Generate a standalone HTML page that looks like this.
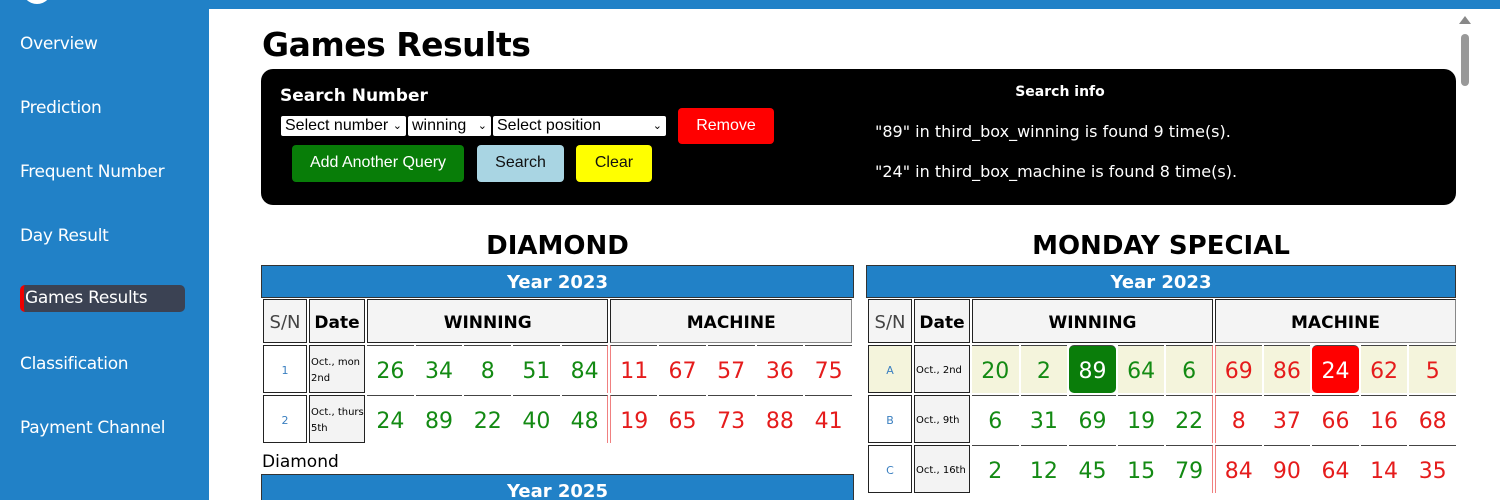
<!DOCTYPE html>
<html style="width:1500px;height:500px;overflow:hidden"><head><meta charset="utf-8"><style>
*{box-sizing:border-box;margin:0;padding:0}
body{width:1500px;height:500px;overflow:hidden;background:#fff;font-family:"DejaVu Sans","Liberation Sans",sans-serif;position:relative}
.side{position:absolute;left:0;top:0;width:209px;height:500px;background:#2181c7}
.side div{position:absolute;left:20px;color:#fff;font-size:17px;letter-spacing:-0.3px}
.topbar{position:absolute;left:209px;top:0;width:1291px;height:9px;background:#2181c7}
.act{background:#3b4253;border-left:4px solid #e00;border-radius:5px;width:165px;height:27px;padding:3px 0 0 1px}
h1{position:absolute;left:262px;top:25px;font-size:33px;font-weight:bold;color:#000;letter-spacing:-0.5px}
.box{position:absolute;left:261px;top:69px;width:1195px;height:136px;background:#000;border-radius:12px}
.abs{position:absolute}
.sel{position:absolute;top:116px;height:20px;background:#fff;border-radius:2px;font-family:"Liberation Sans",sans-serif;font-size:16px;color:#000;padding:0 4px;line-height:20px}
.sel i{position:absolute;right:4px;top:0;font-style:normal;font-size:11px}
.btn{position:absolute;border-radius:4px;font-family:"Liberation Sans",sans-serif;font-size:16px;text-align:center}
.info{position:absolute;left:875px;color:#fff;font-size:16px}
.title{position:absolute;top:231px;font-size:26px;font-weight:bold;text-align:center;color:#000}
.year{position:absolute;top:265px;height:33px;background:#2181c7;border:1px solid #333;color:#fff;font-weight:bold;font-size:18px;text-align:center;line-height:33px}
table{position:absolute;top:297px;border-collapse:separate;border-spacing:2px;table-layout:fixed}
td{text-align:center;vertical-align:middle;padding-top:3px}
.h td{height:44px;border:1px solid #222;background:#f4f4f4;font-weight:bold;font-size:17px}
.h td.sn{font-weight:normal;color:#444;font-size:18px}
.h td.g{border-color:#222 #888 #888 #222}
tr.r td{height:48px}
td.s{border:1px solid #222;color:#3a7fc0;font-size:11px}
td.d{border:1px solid #222;background:#f3f3f3;font-size:10px;text-align:left;line-height:16px;padding-left:1px}
td.w{color:#138a13;font-size:22px;border-top:1px solid #444}
td.m{color:#e51c1c;font-size:22px;border-top:1px solid #444}
td.lw{border-right:1px solid #f08080}
td.fm{border-left:1px solid #f08080}
tr.bg td{background:#f4f4dc}
td.hg{background:#0a7d0a!important;color:#fff;border-radius:5px}
td.hr{background:#f00!important;color:#fff;border-radius:5px}
</style></head><body>
<div class="side">
<div style="left:22px;top:-26px;width:30px;height:30px;border-radius:50%;background:#fff"></div>
<div style="top:34px">Overview</div>
<div style="top:98px">Prediction</div>
<div style="top:162px">Frequent Number</div>
<div style="top:226px">Day Result</div>
<div class="act" style="top:285px;left:20px">Games Results</div>
<div style="top:354px">Classification</div>
<div style="top:418px">Payment Channel</div>
</div>
<div class="topbar"></div>
<div class="abs" style="left:1459px;top:16px;width:0;height:0;border-left:6px solid transparent;border-right:6px solid transparent;border-bottom:8px solid #888"></div>
<div class="abs" style="left:1461px;top:34px;width:8px;height:52px;border-radius:4px;background:#999"></div>
<h1>Games Results</h1>
<div class="box"></div>
<div class="abs" style="left:280px;top:86px;color:#fff;font-weight:bold;font-size:17px">Search Number</div>
<div class="sel" style="left:281px;width:125px">Select number<i>⌄</i></div>
<div class="sel" style="left:408px;width:83px">winning<i>⌄</i></div>
<div class="sel" style="left:493px;width:173px">Select position<i>⌄</i></div>
<div class="btn" style="left:678px;top:108px;width:96px;height:36px;background:#f00;color:#fff;line-height:36px">Remove</div>
<div class="btn" style="left:292px;top:145px;width:172px;height:37px;background:#087d08;color:#fff;line-height:36px">Add Another Query</div>
<div class="btn" style="left:477px;top:145px;width:87px;height:37px;background:#a9d5e3;color:#111;line-height:36px">Search</div>
<div class="btn" style="left:576px;top:145px;width:76px;height:37px;background:#ff0;color:#111;line-height:36px">Clear</div>
<div class="abs" style="left:960px;width:200px;top:84px;text-align:center;color:#fff;font-weight:bold;font-size:14px">Search info</div>
<div class="info" style="top:122px">"89" in third_box_winning is found 9 time(s).</div>
<div class="info" style="top:162px">"24" in third_box_machine is found 8 time(s).</div>

<div class="title" style="left:261px;width:593px">DIAMOND</div>
<div class="year" style="left:261px;width:593px">Year 2023</div>
<table style="left:261px;width:593px">
<colgroup><col style="width:44px"><col style="width:56px"><col span="10" style="width:46.7px"></colgroup>
<tr class="h"><td class="sn">S/N</td><td>Date</td><td colspan="5">WINNING</td><td colspan="5" class="g">MACHINE</td></tr>
<tr class="r"><td class="s">1</td><td class="d">Oct., mon 2nd</td><td class="w">26</td><td class="w">34</td><td class="w">8</td><td class="w">51</td><td class="w lw">84</td><td class="m fm">11</td><td class="m">67</td><td class="m">57</td><td class="m">36</td><td class="m">75</td></tr>
<tr class="r"><td class="s">2</td><td class="d">Oct., thurs 5th</td><td class="w">24</td><td class="w">89</td><td class="w">22</td><td class="w">40</td><td class="w lw">48</td><td class="m fm">19</td><td class="m">65</td><td class="m">73</td><td class="m">88</td><td class="m">41</td></tr>
</table>
<div class="abs" style="left:262px;top:452px;font-size:17px">Diamond</div>
<div class="year" style="left:261px;width:593px;top:474px">Year 2025</div>

<div class="title" style="left:866px;width:590px">MONDAY SPECIAL</div>
<div class="year" style="left:866px;width:590px">Year 2023</div>
<table style="left:866px;width:592px">
<colgroup><col style="width:44px"><col style="width:56px"><col span="10" style="width:46.6px"></colgroup>
<tr class="h"><td class="sn">S/N</td><td>Date</td><td colspan="5">WINNING</td><td colspan="5" class="g">MACHINE</td></tr>
<tr class="r bg"><td class="s">A</td><td class="d" style="background:#f3f3f3">Oct., 2nd</td><td class="w">20</td><td class="w">2</td><td class="w hg">89</td><td class="w">64</td><td class="w lw">6</td><td class="m fm">69</td><td class="m">86</td><td class="m hr">24</td><td class="m">62</td><td class="m">5</td></tr>
<tr class="r"><td class="s">B</td><td class="d">Oct., 9th</td><td class="w">6</td><td class="w">31</td><td class="w">69</td><td class="w">19</td><td class="w lw">22</td><td class="m fm">8</td><td class="m">37</td><td class="m">66</td><td class="m">16</td><td class="m">68</td></tr>
<tr class="r"><td class="s">C</td><td class="d">Oct., 16th</td><td class="w">2</td><td class="w">12</td><td class="w">45</td><td class="w">15</td><td class="w lw">79</td><td class="m fm">84</td><td class="m">90</td><td class="m">64</td><td class="m">14</td><td class="m">35</td></tr>
</table>
</body></html>
